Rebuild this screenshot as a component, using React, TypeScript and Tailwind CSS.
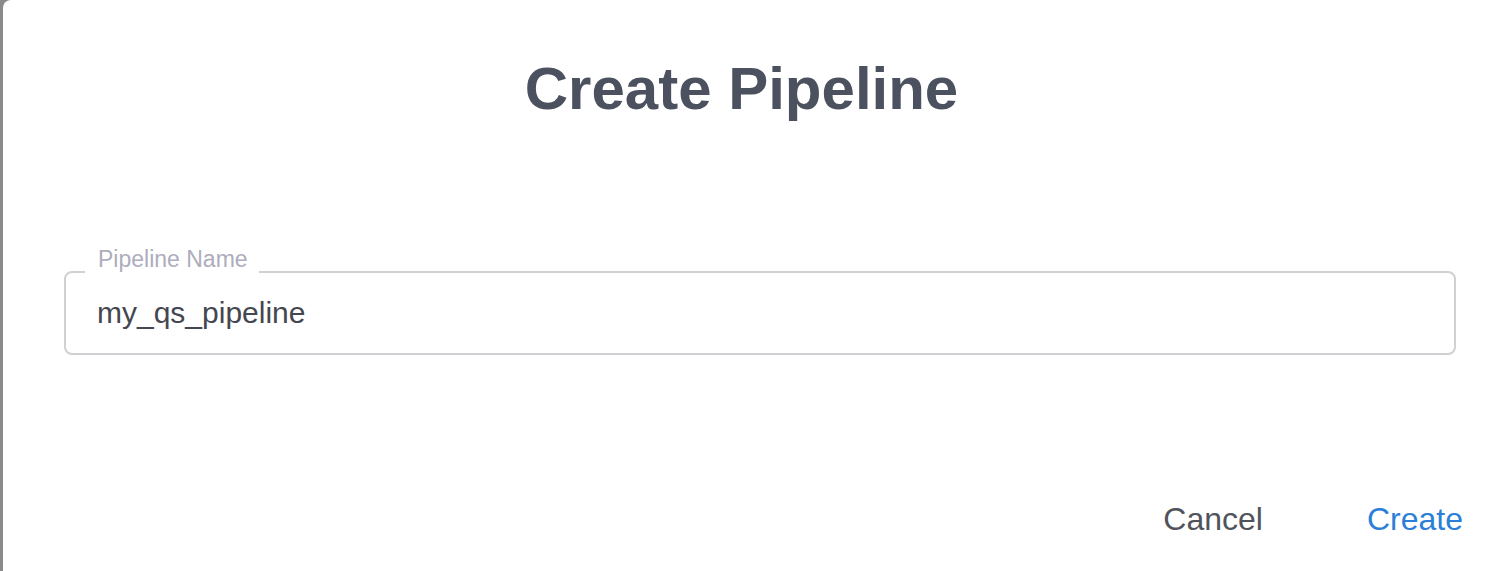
import React from "react";

export default function App() {
  return (
    <div className="w-[1508px] h-[571px] overflow-hidden bg-[#8a8a8a] font-['Liberation_Sans',Arial,sans-serif]">
      <div className="ml-[3px] h-full bg-white rounded-tl-[8px] flex flex-col">
        <h1 className="mt-[59px] pr-[28px] text-center text-[60px] leading-[60px] font-bold text-[#4b515e]">
          Create Pipeline
        </h1>

        <div className="mt-[152px] ml-[61px] mr-[52px] h-[84px] relative border-2 border-[#d0d0d4] rounded-[8px] flex items-center">
          <span className="absolute left-[19px] -top-[25px] pl-[13px] pr-[11px] pb-[5px] bg-white text-[23px] leading-[23px] text-[#adadbc]">
            Pipeline Name
          </span>
          <span className="pl-[31px] text-[30px] leading-[30px] text-[#44474f]">
            my_qs_pipeline
          </span>
        </div>

        <div className="mt-[148px] pr-[45px] flex justify-end gap-[104px] text-[32px] leading-[32px]">
          <button className="text-[#50535c]">Cancel</button>
          <button className="text-[#2b7fd8]">Create</button>
        </div>
      </div>
    </div>
  );
}
